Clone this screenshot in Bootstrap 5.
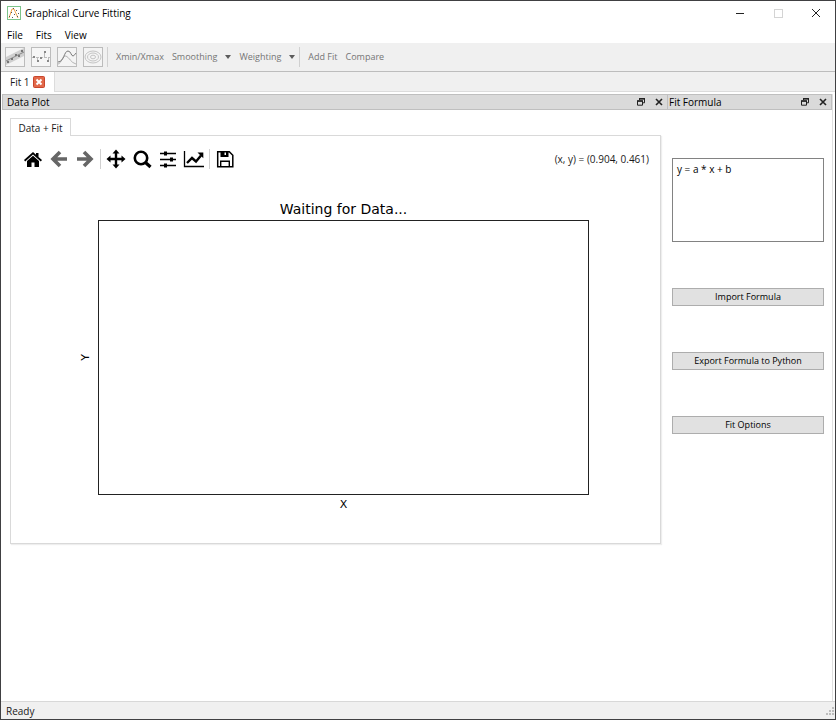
<!DOCTYPE html>
<html lang="en">
<head>
<meta charset="utf-8">
<meta name="viewport" content="width=device-width, initial-scale=1">
<title>Graphical Curve Fitting</title>
<link rel="stylesheet" href="https://cdn.jsdelivr.net/npm/bootstrap@5.3.0/dist/css/bootstrap.min.css">
<style>
body { font-family: "Open Sans", "Noto Sans", sans-serif; font-size: 10px; line-height: 16px; color: #1a1a1a; }
button, textarea { font-family: inherit; }
svg { display: block; flex: none; }
.app-window { border: 1px solid #404042; background: #fff; }
.bare { border: 0; background: none; padding: 0; color: inherit; line-height: 16px; }
.title-row { height: 24px; padding: 0 14px 0 6px; gap: 4px; color: #000; }
.window-buttons { gap: 28px; }
.menu-row { height: 18px; padding: 2px 6px 0; gap: 13px; color: #000; }
.tool-row { height: 29px; padding: 0 4px; background: #f0f0f0; border-bottom: 1px solid #bdbdbd; color: #757575; font-size: 9px; }
.tool-icons { gap: 6px; }
.tool-text { gap: 8px; }
.tool-sep { width: 1px; height: 20px; background: #d0d0d0; }
.caret-down { border: 3px solid transparent; border-top: 4px solid #5c5c5c; border-bottom: 0; }
.doc-tabs { height: 20px; background: #f0f0f0; border-bottom: 1px solid #dcdcdc; }
.doc-tab { width: 54px; height: 20px; padding: 0 0 0 9px; gap: 3px; background: #fff; border-right: 1px solid #dcdcdc; }
.close-tab { width: 12px; height: 12px; }
.work-area { margin: 2px 2px 0 1px; border-right: 1px solid #e0e0e0; }
.dock-side { width: 164px; }
.dock-title { height: 16px; padding: 0 4px; background: #dadada; border: 1px solid #bfbfbf; color: #000; gap: 10px; }
.dock-side .dock-title { padding-left: 1px; border-left: 0; }
.plot-dock { padding: 8px 7px 0 8px; }
.plot-tab { width: 61px; height: 18px; margin-bottom: -1px; border: 1px solid #d9d9d9; border-bottom: 0; background: #fff; position: relative; }
.plot-panel { border: 1px solid #d9d9d9; box-shadow: 1px 1px 1px #eee; padding-bottom: 28px; }
.nav-tools { height: 46px; padding: 0 11px; gap: 4px; }
.nav-tools button { width: 22px; height: 22px; }
.figure-box { padding: 16px 71px 0 67px; font-family: "DejaVu Sans", sans-serif; color: #000; }
.fig-title { font-size: 14px; line-height: 22px; padding-left: 20px; }
.axis-y { width: 20px; font-size: 11px; }
.axis-y span { writing-mode: vertical-rl; transform: rotate(180deg); line-height: 16px; margin-right: 5px; }
.axes { border: 1px solid #222; aspect-ratio: 491 / 275; }
.axis-x { font-size: 11px; line-height: 20px; padding-left: 20px; }
.side-form { padding: 48px 8px 0 4px; gap: 46px; }
.formula { height: 84px; padding: 2px 4px; border: 1px solid #828282; resize: none; display: block; color: #000; line-height: 16px; }
.push { height: 18px; border: 1px solid #adadad; background: #e1e1e1; color: #000; padding: 0; line-height: 16px; font-size: 9px; }
.status-row { height: 18px; padding: 0 1px 0 5px; background: #f0f0f0; border-top: 1px solid #d8d8d8; }
</style>
<script src="https://cdn.jsdelivr.net/npm/bootstrap@5.3.0/dist/js/bootstrap.bundle.min.js"></script>
</head>
<body>
<svg class="d-none">
  <symbol id="float" viewBox="0 0 8 8"><path d="M2.500 2V.8h5v4H6M.5 3h5v4.200h-5z" fill="none" stroke="#222"/><path d="M2 0h6v1.600H2zM0 2.200h6v1.600H0z" fill="#222"/></symbol>
  <symbol id="cross" viewBox="0 0 8 8"><path d="M1 1l6 6M7 1L1 7" stroke="#222" stroke-width="1.600"/></symbol>
</svg>
<div class="app-window d-flex flex-column min-vh-100">
  <header class="title-row d-flex align-items-center">
    <svg width="14" height="14" viewBox="0 0 14 14"><rect x=".5" y=".5" width="13" height="13" fill="#fff" stroke="#7cc48a"/><path d="M2 12L5 3l2 0 4 9" fill="none" stroke="#f2a54a"/><path d="M2 10h1v1H2zM4 6h1v1H4zM6 2h1v1H6zM9 4h1v1H9zM7 8h1v1H7zM10 10h1v1h-1zM5 11h1v1H5zM11 7h1v1h-1z" fill="#555"/></svg>
    <span class="me-auto">Graphical Curve Fitting</span>
    <div class="window-buttons d-flex align-items-center">
      <button class="bare" aria-label="Minimize"><svg width="10" height="10"><path d="M1 5.500h8" stroke="#222"/></svg></button>
      <button class="bare" aria-label="Maximize" disabled><svg width="10" height="10"><rect x="1.500" y="1.500" width="8" height="8" fill="none" stroke="#d4d4d4"/></svg></button>
      <button class="bare" aria-label="Close"><svg width="10" height="10"><path d="M1 1l8 8M9 1L1 9" stroke="#222"/></svg></button>
    </div>
  </header>
  <nav class="menu-row d-flex align-items-center">
    <button class="bare">File</button><button class="bare">Fits</button><button class="bare">View</button>
  </nav>
  <div class="tool-row d-flex align-items-center">
    <div class="tool-icons d-flex">
      <button class="bare" aria-label="Confidence band"><svg width="20" height="20"><rect x=".5" y=".5" width="19" height="19" fill="#f4f4f4" stroke="#bcbcbc"/><path d="M1 10L19 1v8L1 18z" fill="#cfcfcf"/><path d="M1 14L19 5" stroke="#888"/><path d="M2 14h2v2H2zM6 11h2v2H6zM10 7h2v2h-2zM13 8h2v2h-2zM16 3h2v2h-2z" fill="#777"/></svg></button>
      <button class="bare" aria-label="Residuals"><svg width="20" height="20"><rect x=".5" y=".5" width="19" height="19" fill="#f6f6f6" stroke="#bcbcbc"/><path d="M1 10.500h18" stroke="#bbb" stroke-dasharray="3 1"/><path d="M6.500 10v4M13.500 5v6M17.500 10v4" stroke="#bbb"/><path d="M2 9h2v2H2zM6 13h2v2H6zM9 10h2v2H9zM13 4h2v2h-2zM16 13h2v2h-2z" fill="#888"/></svg></button>
      <button class="bare" aria-label="Peaks"><svg width="20" height="20"><rect x=".5" y=".5" width="19" height="19" fill="#f4f4f4" stroke="#bcbcbc"/><path d="M1 17c3 0 5-9 8-8s5 7 10 8" fill="none" stroke="#b4b4b4"/><path d="M1 15C7 15 7 4 11 4c3 0 3 5 5 5 1 0 2-2 3-3" fill="none" stroke="#777"/></svg></button>
      <button class="bare" aria-label="Contours"><svg width="20" height="20" fill="none" stroke="#c4c4c4"><rect x=".5" y=".5" width="19" height="19" fill="#f4f4f4" stroke="#bcbcbc"/><ellipse cx="10" cy="10" rx="8" ry="6"/><ellipse cx="10" cy="10" rx="5.500" ry="4"/><ellipse cx="10" cy="10" rx="2.500" ry="1.800"/></svg></button>
    </div>
    <span class="tool-sep ms-1 me-2"></span>
    <div class="tool-text d-flex">
      <button class="bare">Xmin/Xmax</button>
      <button class="bare d-flex align-items-center gap-2">Smoothing <span class="caret-down"></span></button>
      <button class="bare d-flex align-items-center gap-2">Weighting <span class="caret-down"></span></button>
    </div>
    <span class="tool-sep ms-1 me-2"></span>
    <div class="tool-text d-flex">
      <button class="bare">Add Fit</button>
      <button class="bare">Compare</button>
    </div>
  </div>
  <div class="doc-tabs">
    <div class="doc-tab d-flex align-items-center"><span>Fit 1</span>
      <button class="bare" aria-label="Close Fit 1"><svg class="close-tab" viewBox="0 0 12 12"><rect x=".5" y=".5" width="11" height="11" rx="1" fill="#e2694a" stroke="#c9452c"/><path d="M3.500 3.500l5 5M8.500 3.500l-5 5" stroke="#fff" stroke-width="2"/></svg></button>
    </div>
  </div>
  <main class="work-area d-flex flex-grow-1">
    <section class="flex-grow-1">
      <div class="dock-title d-flex align-items-center"><span class="me-auto">Data Plot</span>
        <button class="bare" aria-label="Float"><svg width="8" height="8"><use href="#float"/></svg></button>
        <button class="bare" aria-label="Close"><svg width="8" height="8"><use href="#cross"/></svg></button></div>
      <div class="plot-dock">
        <button class="bare plot-tab d-block text-center">Data + Fit</button>
        <div class="plot-panel">
          <div class="nav-tools d-flex align-items-center">
            <button class="bare" aria-label="Home"><svg width="22" height="22"><path d="M2 12l9-8 3 2.700V5h2.500v4L20 12l-1.200 1.400L11 6.600l-7.800 6.800z"/><path d="M5 13l6-5.200 6 5.200v6h-4.500v-4.500h-3V19H5z"/></svg></button>
            <button class="bare" aria-label="Back"><svg width="22" height="22" fill="none" stroke="#666" stroke-width="3.600"><path d="M19 11H5M12 4l-7 7 7 7"/></svg></button>
            <button class="bare" aria-label="Forward"><svg width="22" height="22" fill="none" stroke="#666" stroke-width="3.600"><path d="M3 11h14M10 4l7 7-7 7"/></svg></button>
            <span class="tool-sep"></span>
            <button class="bare" aria-label="Pan"><svg width="22" height="22"><path d="M11 1.500l3.500 4h-2.300v4.300h4.300V7.500l4 3.500-4 3.500v-2.300h-4.300v4.300h2.300l-3.500 4-3.500-4h2.300v-4.300H5.500v2.300l-4-3.500 4-3.500v2.300h4.300V5.500H7.500z"/></svg></button>
            <button class="bare" aria-label="Zoom"><svg width="22" height="22" fill="none" stroke="#000"><circle cx="10" cy="10" r="6.200" stroke-width="2.600"/><path d="M14.500 14.500l5 4.500" stroke-width="3.200"/></svg></button>
            <button class="bare" aria-label="Subplots"><svg width="22" height="22"><path d="M3 5.500h16M3 11.500h16M3 17.500h16" stroke="#000" stroke-width="1.500"/><path d="M7 3.500h3v4H7zM13 9.500h3v4h-3zM7 15.500h3v4H7z"/></svg></button>
            <button class="bare" aria-label="Edit axes"><svg width="22" height="22"><path d="M1.500 3v15.500H21" fill="none" stroke="#000" stroke-width="1.300"/><path d="M4 15l5-5 4 3.500L18 7.500" fill="none" stroke="#000" stroke-width="2.400"/><path d="M14.500 4.500h5.800v5.800z"/></svg></button>
            <span class="tool-sep"></span>
            <button class="bare" aria-label="Save"><svg width="22" height="22"><path d="M3.700 3.700h11.600l3.500 3.500v11.600H3.700z" fill="none" stroke="#000" stroke-width="1.500"/><path d="M6.500 3v6h8V3H12v4h-1.500V3z"/><path d="M6.700 18.500v-5.300h8.600v5.300" fill="none" stroke="#000" stroke-width="1.400"/></svg></button>
            <span class="ms-auto">(x, y) = (0.904, 0.461)</span>
          </div>
          <div class="figure-box">
            <div class="fig-title text-center">Waiting for Data...</div>
            <div class="d-flex">
              <div class="axis-y d-flex align-items-center"><span>Y</span></div>
              <div class="axes flex-grow-1"></div>
            </div>
            <div class="axis-x text-center">X</div>
          </div>
        </div>
      </div>
    </section>
    <section class="dock-side">
      <div class="dock-title d-flex align-items-center"><span class="me-auto">Fit Formula</span>
        <button class="bare" aria-label="Float"><svg width="8" height="8"><use href="#float"/></svg></button>
        <button class="bare" aria-label="Close"><svg width="8" height="8"><use href="#cross"/></svg></button></div>
      <div class="side-form d-flex flex-column">
        <textarea class="formula w-100" aria-label="Fit formula">y = a * x + b</textarea>
        <button class="push">Import Formula</button>
        <button class="push">Export Formula to Python</button>
        <button class="push">Fit Options</button>
      </div>
    </section>
  </main>
  <footer class="status-row d-flex align-items-center justify-content-between"><span>Ready</span>
    <svg class="align-self-end mb-1" width="8" height="8"><path d="M6 0h2v2H6zM6 3h2v2H6zM6 6h2v2H6zM3 3h2v2H3zM3 6h2v2H3zM0 6h2v2H0z" fill="#bdbdbd"/></svg>
  </footer>
</div>
</body>
</html>
